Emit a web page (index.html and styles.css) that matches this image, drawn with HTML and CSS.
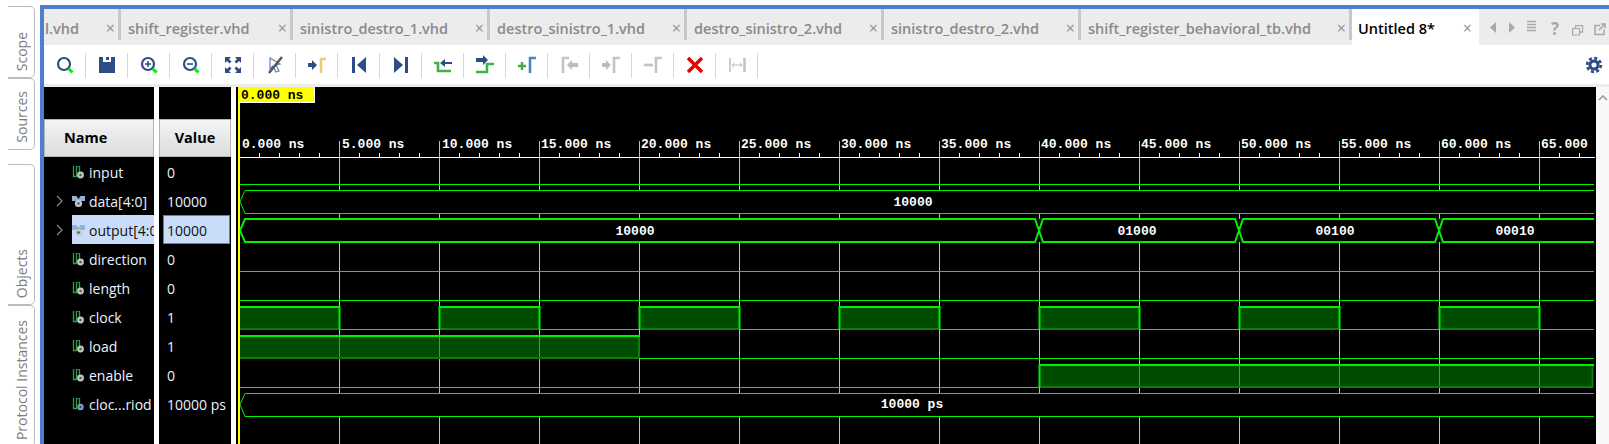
FILE: index.html
```html
<!DOCTYPE html>
<html lang="it">

<head>
    <meta charset="UTF-8">
    <title>Untitled 8</title>
    <link rel="stylesheet" href="styles.css">
</head>

<body>
    <!-- simboli dei segnali -->
    <svg class="defs">
        <symbol id="bit" viewBox="0 0 13 13">
            <path d="M1.500 0v10.500h3V0h3v6" fill="none" stroke="#2e9e48" stroke-width="1.300"/>
            <circle cx="8.500" cy="9" r="3.400" fill="#c4c4c4"/>
            <circle cx="8.500" cy="9" r="1.200" fill="#555"/>
        </symbol>
        <symbol id="period" viewBox="0 0 13 13">
            <path d="M1.500 0v10.500h3V0h3v6" fill="none" stroke="#2e9e48" stroke-width="1.300"/>
            <circle cx="8.500" cy="9" r="3.200" fill="#7f9cc9"/>
            <circle cx="8.500" cy="9" r="1.200" fill="#2f4d85"/>
        </symbol>
        <symbol id="bus" viewBox="0 0 13 13">
            <path d="M0 1h4.500l2 3 2-3H13v5H9.500L6.500 8 3.500 6H0z" fill="#8fb3d6"/>
            <circle cx="6.500" cy="8.500" r="3.600" fill="#c8c8c8"/>
            <circle cx="6.500" cy="8.500" r="1.300" fill="#555"/>
        </symbol>
    </svg>

    <div class="app">
        <div class="rail">
            <div class="side-tab scope"><span>Scope</span></div>
            <div class="side-tab sources"><span>Sources</span></div>
            <div class="side-tab objects"><span>Objects</span></div>
            <div class="side-tab protocol"><span>Protocol Instances</span></div>
        </div>

        <div class="main">
            <div class="tabs">
                <div class="tab first"><span>l.vhd</span><i>×</i></div>
                <div class="tab"><span>shift_register.vhd</span><i>×</i></div>
                <div class="tab"><span>sinistro_destro_1.vhd</span><i>×</i></div>
                <div class="tab"><span>destro_sinistro_1.vhd</span><i>×</i></div>
                <div class="tab"><span>destro_sinistro_2.vhd</span><i>×</i></div>
                <div class="tab"><span>sinistro_destro_2.vhd</span><i>×</i></div>
                <div class="tab"><span>shift_register_behavioral_tb.vhd</span><i>×</i></div>
                <div class="tab active"><span>Untitled 8*</span><i>×</i></div>
                <div class="tab-tools">
                    <svg width="122" height="24" viewBox="0 0 122 24">
                        <path d="M3 10.500l6-5.500v11z" fill="#a9a9a9"/>
                        <path d="M22 5l6 5.500-6 5.500z" fill="#a9a9a9"/>
                        <path d="M40 4.500h9M40 7.500h9M40 10.500h9M40 13.500h9" stroke="#a9a9a9" stroke-width="1.600"/>
                        <text class="help" x="68" y="18">?</text>
                        <path d="M85.600 11.500h7v6.500h-7zM88.600 11.500V8.600h7v6.500h-3" fill="none" stroke="#a9a9a9" stroke-width="1.200"/>
                        <path d="M113 8.500h-5v9h9v-5M112 13l6-6M114 7h4v4" fill="none" stroke="#a9a9a9" stroke-width="1.600"/>
                    </svg>
                </div>
            </div>

            <div class="toolbar">
                <div class="tool"><svg viewBox="0 0 24 24"><circle cx="11" cy="11" r="6" class="ln"/><path d="M15.500 15.500l4 4" class="ln thick"/></svg></div>
                <div class="tool"><svg viewBox="0 0 24 24"><path d="M4 4h4v5h8V4h4v16H4z M11 4h3v3h-3z" class="blue"/></svg></div>
                <div class="tool"><svg viewBox="0 0 24 24"><circle cx="11" cy="11" r="6" class="ln"/><path d="M15.500 15.500l4 4" class="ln thick"/><path d="M8 11h6M11 8v6" class="ln thin"/></svg></div>
                <div class="tool"><svg viewBox="0 0 24 24"><circle cx="11" cy="11" r="6" class="ln"/><path d="M15.500 15.500l4 4" class="ln thick"/><path d="M8 11h6" class="ln thin"/></svg></div>
                <div class="tool"><svg viewBox="0 0 24 24"><path d="M4 4h6l-2 2 2.500 2.500-2 2L6 8l-2 2zM20 4v6l-2-2-2.500 2.500-2-2L16 6l-2-2zM4 20v-6l2 2 2.500-2.500 2 2L8 18l2 2zM20 20h-6l2-2-2.500-2.500 2-2L18 16l2-2z" class="blue"/></svg></div>
                <div class="tool"><svg viewBox="0 0 24 24"><path d="M7 5l10 6-4 1 3 6-3 1-3-6-3 3z" fill="none" stroke="#5b82b5" stroke-width="1.200"/><path d="M19 4L6 20" stroke="#555" stroke-width="2.400"/></svg></div>
                <div class="tool"><svg viewBox="0 0 24 24"><path d="M3 10h4V7l5 5-5 5v-3H3z" class="blue"/><path d="M16 20V6h5" class="br yellow"/></svg></div>
                <div class="tool"><svg viewBox="0 0 24 24"><path d="M5 4h3v16H5zM19 4v16l-9-8z" class="blue"/></svg></div>
                <div class="tool"><svg viewBox="0 0 24 24"><path d="M19 4h-3v16h3zM5 4v16l9-8z" class="blue"/></svg></div>
                <div class="tool"><svg viewBox="0 0 24 24"><path d="M3 10h4v8h13" class="br green"/><path d="M21 9h-7V6l-5 4 5 4v-3h7z" class="blue"/></svg></div>
                <div class="tool"><svg viewBox="0 0 24 24"><path d="M3 19h11v-8h7" class="br green"/><path d="M3 5h7V2l5 5-5 5V9H3z" class="blue"/></svg></div>
                <div class="tool"><svg viewBox="0 0 24 24"><path d="M3 13h8M7 9v8" stroke="#3fae49" stroke-width="2.400"/><path d="M15 20V5h6" class="br steel"/></svg></div>
                <div class="tool"><svg viewBox="0 0 24 24"><path d="M6 20V5h6" class="br grey"/><path d="M21 10h-6V7l-5 5 5 5v-3h6z" class="off"/></svg></div>
                <div class="tool"><svg viewBox="0 0 24 24"><path d="M3 10h4V7l5 5-5 5v-3H3z" class="off"/><path d="M15 20V5h6" class="br grey"/></svg></div>
                <div class="tool"><svg viewBox="0 0 24 24"><path d="M3 12h9" class="br grey"/><path d="M15 20V5h6" class="br grey"/></svg></div>
                <div class="tool"><svg viewBox="0 0 24 24"><path d="M5 5l14 14M19 5L5 19" stroke="#e60000" stroke-width="3.400"/></svg></div>
                <div class="tool"><svg viewBox="0 0 24 24"><path d="M5 5v14" stroke="#ccc" stroke-width="2"/><path d="M19.500 5v14" class="br grey"/><path d="M7 12h10M9 10l-2 2 2 2M15 10l2 2-2 2" fill="none" stroke="#bbb"/></svg></div>
                <div class="tool-fill"></div>
                <div class="gear">
                    <svg viewBox="0 0 20 20" width="18" height="18">
                        <circle cx="10" cy="10" r="7.600" fill="none" stroke="#2c4a85" stroke-width="3" stroke-dasharray="3.400 2.570"/>
                        <circle cx="10" cy="10" r="4.500" fill="none" stroke="#2c4a85" stroke-width="3.400"/>
                    </svg>
                </div>
            </div>

            <div class="strip"></div>

            <div class="pane">
                <div class="col names">
                    <div class="col-top"></div>
                    <div class="head name-head">Name</div>
                    <div class="row"><b class="chev"></b><div class="sig"><svg class="ico"><use href="#bit"/></svg>input</div></div>
                    <div class="row"><b class="chev"><svg viewBox="0 0 7 12"><path d="M1 1l5 5-5 5" fill="none" stroke="#888" stroke-width="1.200"/></svg></b><div class="sig"><svg class="ico"><use href="#bus"/></svg>data[4:0]</div></div>
                    <div class="row"><b class="chev"><svg viewBox="0 0 7 12"><path d="M1 1l5 5-5 5" fill="none" stroke="#888" stroke-width="1.200"/></svg></b><div class="sig selected"><svg class="ico"><use href="#bus"/></svg>output[4:0]</div></div>
                    <div class="row"><b class="chev"></b><div class="sig"><svg class="ico"><use href="#bit"/></svg>direction</div></div>
                    <div class="row"><b class="chev"></b><div class="sig"><svg class="ico"><use href="#bit"/></svg>length</div></div>
                    <div class="row"><b class="chev"></b><div class="sig"><svg class="ico"><use href="#bit"/></svg>clock</div></div>
                    <div class="row"><b class="chev"></b><div class="sig"><svg class="ico"><use href="#bit"/></svg>load</div></div>
                    <div class="row"><b class="chev"></b><div class="sig"><svg class="ico"><use href="#bit"/></svg>enable</div></div>
                    <div class="row"><b class="chev"></b><div class="sig"><svg class="ico"><use href="#period"/></svg>cloc...riod</div></div>
                </div>

                <div class="col values">
                    <div class="col-top"></div>
                    <div class="head">Value</div>
                    <div class="val">0</div>
                    <div class="val">10000</div>
                    <div class="val selected">10000</div>
                    <div class="val">0</div>
                    <div class="val">0</div>
                    <div class="val">1</div>
                    <div class="val">1</div>
                    <div class="val">0</div>
                    <div class="val">10000 ps</div>
                </div>

                <!-- viewBox in coordinate della finestra -->
                <svg class="wave" viewBox="236 87 1360 357" width="1360" height="357">
                    <path class="grid" d="M339.500 141V444M439.500 141V444M539.500 141V444M639.500 141V444M739.500 141V444M839.500 141V444M939.500 141V444M1039.500 141V444M1139.500 141V444M1239.500 141V444M1339.500 141V444M1439.500 141V444M1539.500 141V444"/>
                    <path class="ruler" d="M240 157.500H1595M259.500 153V157M279.500 153V157M299.500 153V157M319.500 153V157M359.500 153V157M379.500 153V157M399.500 153V157M419.500 153V157M459.500 153V157M479.500 153V157M499.500 153V157M519.500 153V157M559.500 153V157M579.500 153V157M599.500 153V157M619.500 153V157M659.500 153V157M679.500 153V157M699.500 153V157M719.500 153V157M759.500 153V157M779.500 153V157M799.500 153V157M819.500 153V157M859.500 153V157M879.500 153V157M899.500 153V157M919.500 153V157M959.500 153V157M979.500 153V157M999.500 153V157M1019.500 153V157M1059.500 153V157M1079.500 153V157M1099.500 153V157M1119.500 153V157M1159.500 153V157M1179.500 153V157M1199.500 153V157M1219.500 153V157M1259.500 153V157M1279.500 153V157M1299.500 153V157M1319.500 153V157M1359.500 153V157M1379.500 153V157M1399.500 153V157M1419.500 153V157M1459.500 153V157M1479.500 153V157M1499.500 153V157M1519.500 153V157M1559.500 153V157M1579.500 153V157"/>

                    <g class="time">
                        <text x="242" y="148">0.000 ns</text>
                        <text x="342" y="148">5.000 ns</text>
                        <text x="442" y="148">10.000 ns</text>
                        <text x="541" y="148">15.000 ns</text>
                        <text x="641" y="148">20.000 ns</text>
                        <text x="741" y="148">25.000 ns</text>
                        <text x="841" y="148">30.000 ns</text>
                        <text x="941" y="148">35.000 ns</text>
                        <text x="1041" y="148">40.000 ns</text>
                        <text x="1141" y="148">45.000 ns</text>
                        <text x="1241" y="148">50.000 ns</text>
                        <text x="1341" y="148">55.000 ns</text>
                        <text x="1441" y="148">60.000 ns</text>
                        <text x="1541" y="148">65.000</text>
                    </g>

                    <!-- segnali a un bit -->
                    <path class="line" d="M240 184.500H1594M240 271.500H1594M240 300.500H1594"/>

                    <!-- clock -->
                    <g class="high">
                        <rect x="240" y="307" width="99" height="22"/>
                        <rect x="440" y="307" width="99" height="22"/>
                        <rect x="640" y="307" width="99" height="22"/>
                        <rect x="840" y="307" width="99" height="22"/>
                        <rect x="1040" y="307" width="99" height="22"/>
                        <rect x="1240" y="307" width="99" height="22"/>
                        <rect x="1440" y="307" width="99" height="22"/>
                    </g>
                    <path class="line" d="M339 329.500H439M539 329.500H639M739 329.500H839M939 329.500H1039M1139 329.500H1239M1339 329.500H1439M1539 329.500H1594"/>
                    <path class="dim" d="M240 329H339M440 329H539M640 329H739M840 329H939M1040 329H1139M1240 329H1339M1440 329H1539"/>
                    <path class="bright" d="M240 307H339.500V329M439.500 329V307H539.500V329M639.500 329V307H739.500V329M839.500 329V307H939.500V329M1039.500 329V307H1139.500V329M1239.500 329V307H1339.500V329M1439.500 329V307H1539.500V329"/>

                    <!-- load -->
                    <rect class="high" x="240" y="336" width="399" height="22"/>
                    <path class="dim" d="M240 358H639V336"/>
                    <path class="bright" d="M240 336H640"/>
                    <path class="line" d="M639 358.500H1594"/>

                    <!-- enable -->
                    <path class="line" d="M240 387.500H1040"/>
                    <rect class="high" x="1040" y="365" width="553" height="22"/>
                    <path class="dim" d="M1040 387H1592.500V365"/>
                    <path class="bright" d="M1039.500 387V365H1594"/>

                    <!-- bus -->
                    <rect class="mask" x="240" y="190" width="1354" height="23"/>
                    <path class="line" d="M1594 190.500H245L240 201.500L245 213.500H1594"/>
                    <rect class="mask" x="240" y="219" width="1354" height="23"/>
                    <path class="thick" d="M1594 219H1443L1435 242H1243L1235 219H1043L1035 242H245L240 230.500L245 219H1035L1043 242H1235L1243 219H1435L1443 242H1594"/>
                    <rect class="mask" x="240" y="393" width="1354" height="23"/>
                    <path class="line" d="M1594 393.500H245L240 404.500L245 416.500H1594"/>

                    <g class="time mid">
                        <text x="913" y="206">10000</text>
                        <text x="635" y="235">10000</text>
                        <text x="1137" y="235">01000</text>
                        <text x="1335" y="235">00100</text>
                        <text x="1515" y="235">00010</text>
                        <text x="912" y="408">10000 ps</text>
                    </g>

                    <!-- cursore -->
                    <rect class="cursor" x="238" y="87" width="2" height="357"/>
                    <rect class="flag-edge" x="238" y="87" width="77" height="16"/>
                    <rect class="cursor" x="238" y="87" width="76" height="15"/>
                    <text class="flag" x="241" y="99">0.000 ns</text>
                </svg>

                <div class="scroll">
                    <svg viewBox="0 0 10 6" width="10" height="6"><path d="M1 5l4-4 4 4" fill="none" stroke="#999" stroke-width="1.600"/></svg>
                </div>
            </div>
        </div>
    </div>
</body>

</html>
```

FILE: styles.css
```css
body {
    margin: 0;
    width: 1609px;
    height: 444px;
    overflow: hidden;
    background-color: #fff;
    font-family: "Open Sans", "Noto Sans", sans-serif;
}

.defs {
    position: absolute;
    width: 0;
    height: 0;
}

.app {
    display: flex;
    height: 444px;
}

/* barra laterale */
.rail {
    width: 40px;
    flex: none;
    overflow: hidden;
    padding-top: 6px;
    box-sizing: border-box;
}

.side-tab {
    width: 27px;
    margin-left: 8px;
    box-sizing: border-box;
    border: 1px solid #bdbdbd;
    border-left: none;
    border-radius: 0 5px 5px 0;
    display: flex;
    align-items: flex-end;
    justify-content: center;
    padding-bottom: 6px;
}

.side-tab span {
    writing-mode: vertical-rl;
    transform: rotate(180deg);
    font-size: 14px;
    color: #7d7d7d;
    white-space: nowrap;
}

.scope { height: 72px; }
.sources { height: 72px; }
.objects { height: 141px; margin-top: 14px; }
.protocol { height: 142px; flex: none; }

.main {
    flex: 1;
    margin-top: 5px;
    border-top: 4px solid #4d7fcf;
    border-left: 4px solid #4d7fcf;
    min-width: 0;
}

/* schede */
.tabs {
    display: grid;
    grid-template-columns: 77px 172px repeat(4, 197px) 271px 127px 1fr;
    height: 36px;
    background-color: #ececec;
}

.tab {
    height: 24px;
    padding: 7px 0 0 7px;
    border-right: 3px solid #c8c8c8;
    display: flex;
    align-items: center;
    justify-content: space-between;
    font-size: 14.5px;
    font-weight: 600;
    color: #8a8a8a;
    white-space: nowrap;
    overflow: hidden;
}

.tab i {
    font-style: normal;
    font-weight: 400;
    font-size: 16px;
    color: #8f8f8f;
    padding-right: 3px;
}

.tab.first {
    padding-left: 1px;
}

.tab.active {
    padding-bottom: 5px;
    padding-left: 6px;
    background-color: #fff;
    border-right: none;
    color: #000;
}

.tab.active i {
    padding-right: 7px;
}

.tab-tools {
    display: flex;
    align-items: center;
    padding: 4px 0 0 8px;
    overflow: hidden;
}

.help {
    font-size: 17px;
    font-weight: 700;
    fill: #a9a9a9;
    text-anchor: middle;
}

/* toolbar */
.toolbar {
    display: flex;
    align-items: center;
    height: 39px;
    background-color: #fff;
}

.tool {
    width: 41px;
    height: 25px;
    margin-top: 1px;
    border-right: 1px solid #d6d6d6;
    display: flex;
    align-items: center;
    justify-content: center;
}

.tool svg {
    width: 24px;
    height: 24px;
}

.tool-fill {
    flex: 1;
}

.gear {
    width: 18px;
    height: 18px;
    margin-right: 6px;
}

.ln {
    fill: none;
    stroke: #2f4d85;
    stroke-width: 2.2;
}

.ln.thick { stroke-width: 3; }
.ln.thin { stroke-width: 1.6; }

.blue { fill: #2f4d85; fill-rule: evenodd; }
.off { fill: #bdbdbd; }

.br {
    fill: none;
    stroke-width: 2.6;
}

.yellow { stroke: #e3cf7c; }
.green { stroke: #3fb548; }
.steel { stroke: #4a86b8; }
.grey { stroke: #c4c4c4; }

.strip {
    height: 3px;
    background-color: #ececec;
}

/* pannello forme d'onda */
.pane {
    display: flex;
    height: 357px;
    background-color: #fff;
}

.col {
    background-color: #000;
    flex: none;
    font-size: 14px;
    color: #eaf2ff;
}

.names {
    width: 110px;
    margin-right: 5px;
}

.values {
    width: 72px;
    margin-right: 5px;
}

.col-top {
    height: 32px;
}

.head {
    height: 38px;
    box-sizing: border-box;
    border: 1px solid #b4b4b4;
    padding-bottom: 2px;
    background: linear-gradient(#f4f4f4, #dcdcdc);
    color: #000;
    font-size: 14.5px;
    font-weight: 700;
    display: flex;
    align-items: center;
    justify-content: center;
}

.name-head {
    justify-content: flex-start;
    padding-left: 19px;
}

.row {
    height: 29px;
    display: flex;
    align-items: center;
    padding-left: 12px;
}

.chev {
    width: 7px;
    height: 12px;
    margin-right: 9px;
    flex: none;
}

.chev svg {
    display: block;
}

.sig {
    flex: 1;
    min-width: 0;
    height: 100%;
    box-sizing: border-box;
    padding-top: 1px;
    display: flex;
    align-items: center;
    white-space: nowrap;
    overflow: hidden;
}

.sig.selected {
    background-color: #c9ddfb;
    color: #111;
}

.ico {
    width: 13px;
    height: 13px;
    margin-right: 4px;
    flex: none;
}

.val {
    height: 29px;
    box-sizing: border-box;
    width: 67px;
    margin-left: 4px;
    padding: 1px 0 0 3px;
    border: 1px solid transparent;
    display: flex;
    align-items: center;
    white-space: nowrap;
}

.val.selected {
    background-color: #c9ddfb;
    border-color: #4a8ac4;
    color: #111;
}

.wave {
    display: block;
    flex: none;
    background-color: #000;
}

.wave path {
    fill: none;
}

.grid {
    stroke: #bdbdbd;
}

.ruler {
    stroke: #fff;
}

.time text {
    font-family: "Liberation Mono", monospace;
    font-size: 13px;
    font-weight: 700;
    fill: #fff;
}

.time.mid text {
    text-anchor: middle;
}

.line {
    stroke: #00f000;
}

.thick {
    stroke: #00f000;
    stroke-width: 2;
}

.bright {
    stroke: #00ee00;
    stroke-width: 2;
}

.dim {
    stroke: #0a7d0a;
    stroke-width: 2;
}

.high {
    fill: rgba(0, 128, 0, 0.6);
}

.mask {
    fill: #000;
}

.cursor {
    fill: #ffff00;
}

.flag-edge {
    fill: #fff;
}

.flag {
    font-family: "Liberation Mono", monospace;
    font-size: 13px;
    font-weight: 700;
    fill: #000;
}

.scroll {
    flex: 1;
    background-color: #f8f8f8;
    display: flex;
    justify-content: center;
    padding-top: 8px;
    align-items: flex-start;
}
```
